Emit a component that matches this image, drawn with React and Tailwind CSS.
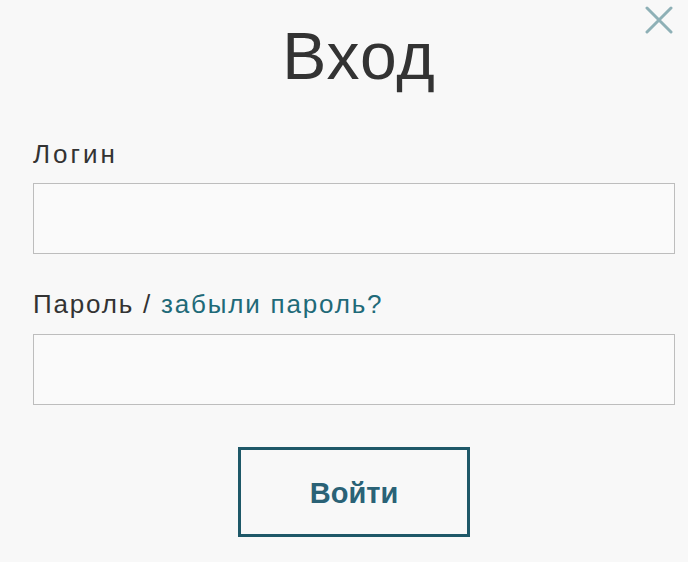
import React from "react"

function CloseIcon() {
  return (
    <svg width="28" height="28" viewBox="0 0 28 28" fill="none">
      <path d="M2 2L26 26M26 2L2 26" stroke="#8eb0b6" strokeWidth="3" strokeLinecap="round" />
    </svg>
  )
}

export default function App() {
  return (
    <div
      className="w-[688px] h-[562px] bg-[#f8f8f8] relative flex flex-col pl-[33px] pr-[13px] text-[#333]"
      style={{ fontFamily: '"Liberation Sans", Arial, sans-serif' }}
    >
      {/* Close button */}
      <button className="absolute right-[15px] top-[6px]">
        <CloseIcon />
      </button>

      <h1 className="text-[66px] leading-none text-center text-[#333] pt-[23px] pl-[10px] tracking-[1px]">Вход</h1>

      <label className="mt-[52px] text-[26px] leading-none tracking-[3px]">Логин</label>
      <input
        type="text"
        className="mt-[16px] h-[71px] w-full bg-[#fafafa] border-[1.5px] border-[#bdbdbd] outline-none"
      />

      <div className="mt-[37px] text-[26px] leading-none tracking-[1.8px]">
        Пароль / <a href="#" className="text-[#1f6a78]">забыли пароль?</a>
      </div>
      <input
        type="password"
        className="mt-[17px] h-[71px] w-full bg-[#fafafa] border-[1.5px] border-[#bdbdbd] outline-none"
      />

      <div className="flex justify-center mt-[42px]">
        <button className="w-[232px] h-[90px] border-[3px] border-[#1e5868] text-[#2a6276] text-[29px] font-bold pt-[4px]">
          Войти
        </button>
      </div>
    </div>
  )
}
